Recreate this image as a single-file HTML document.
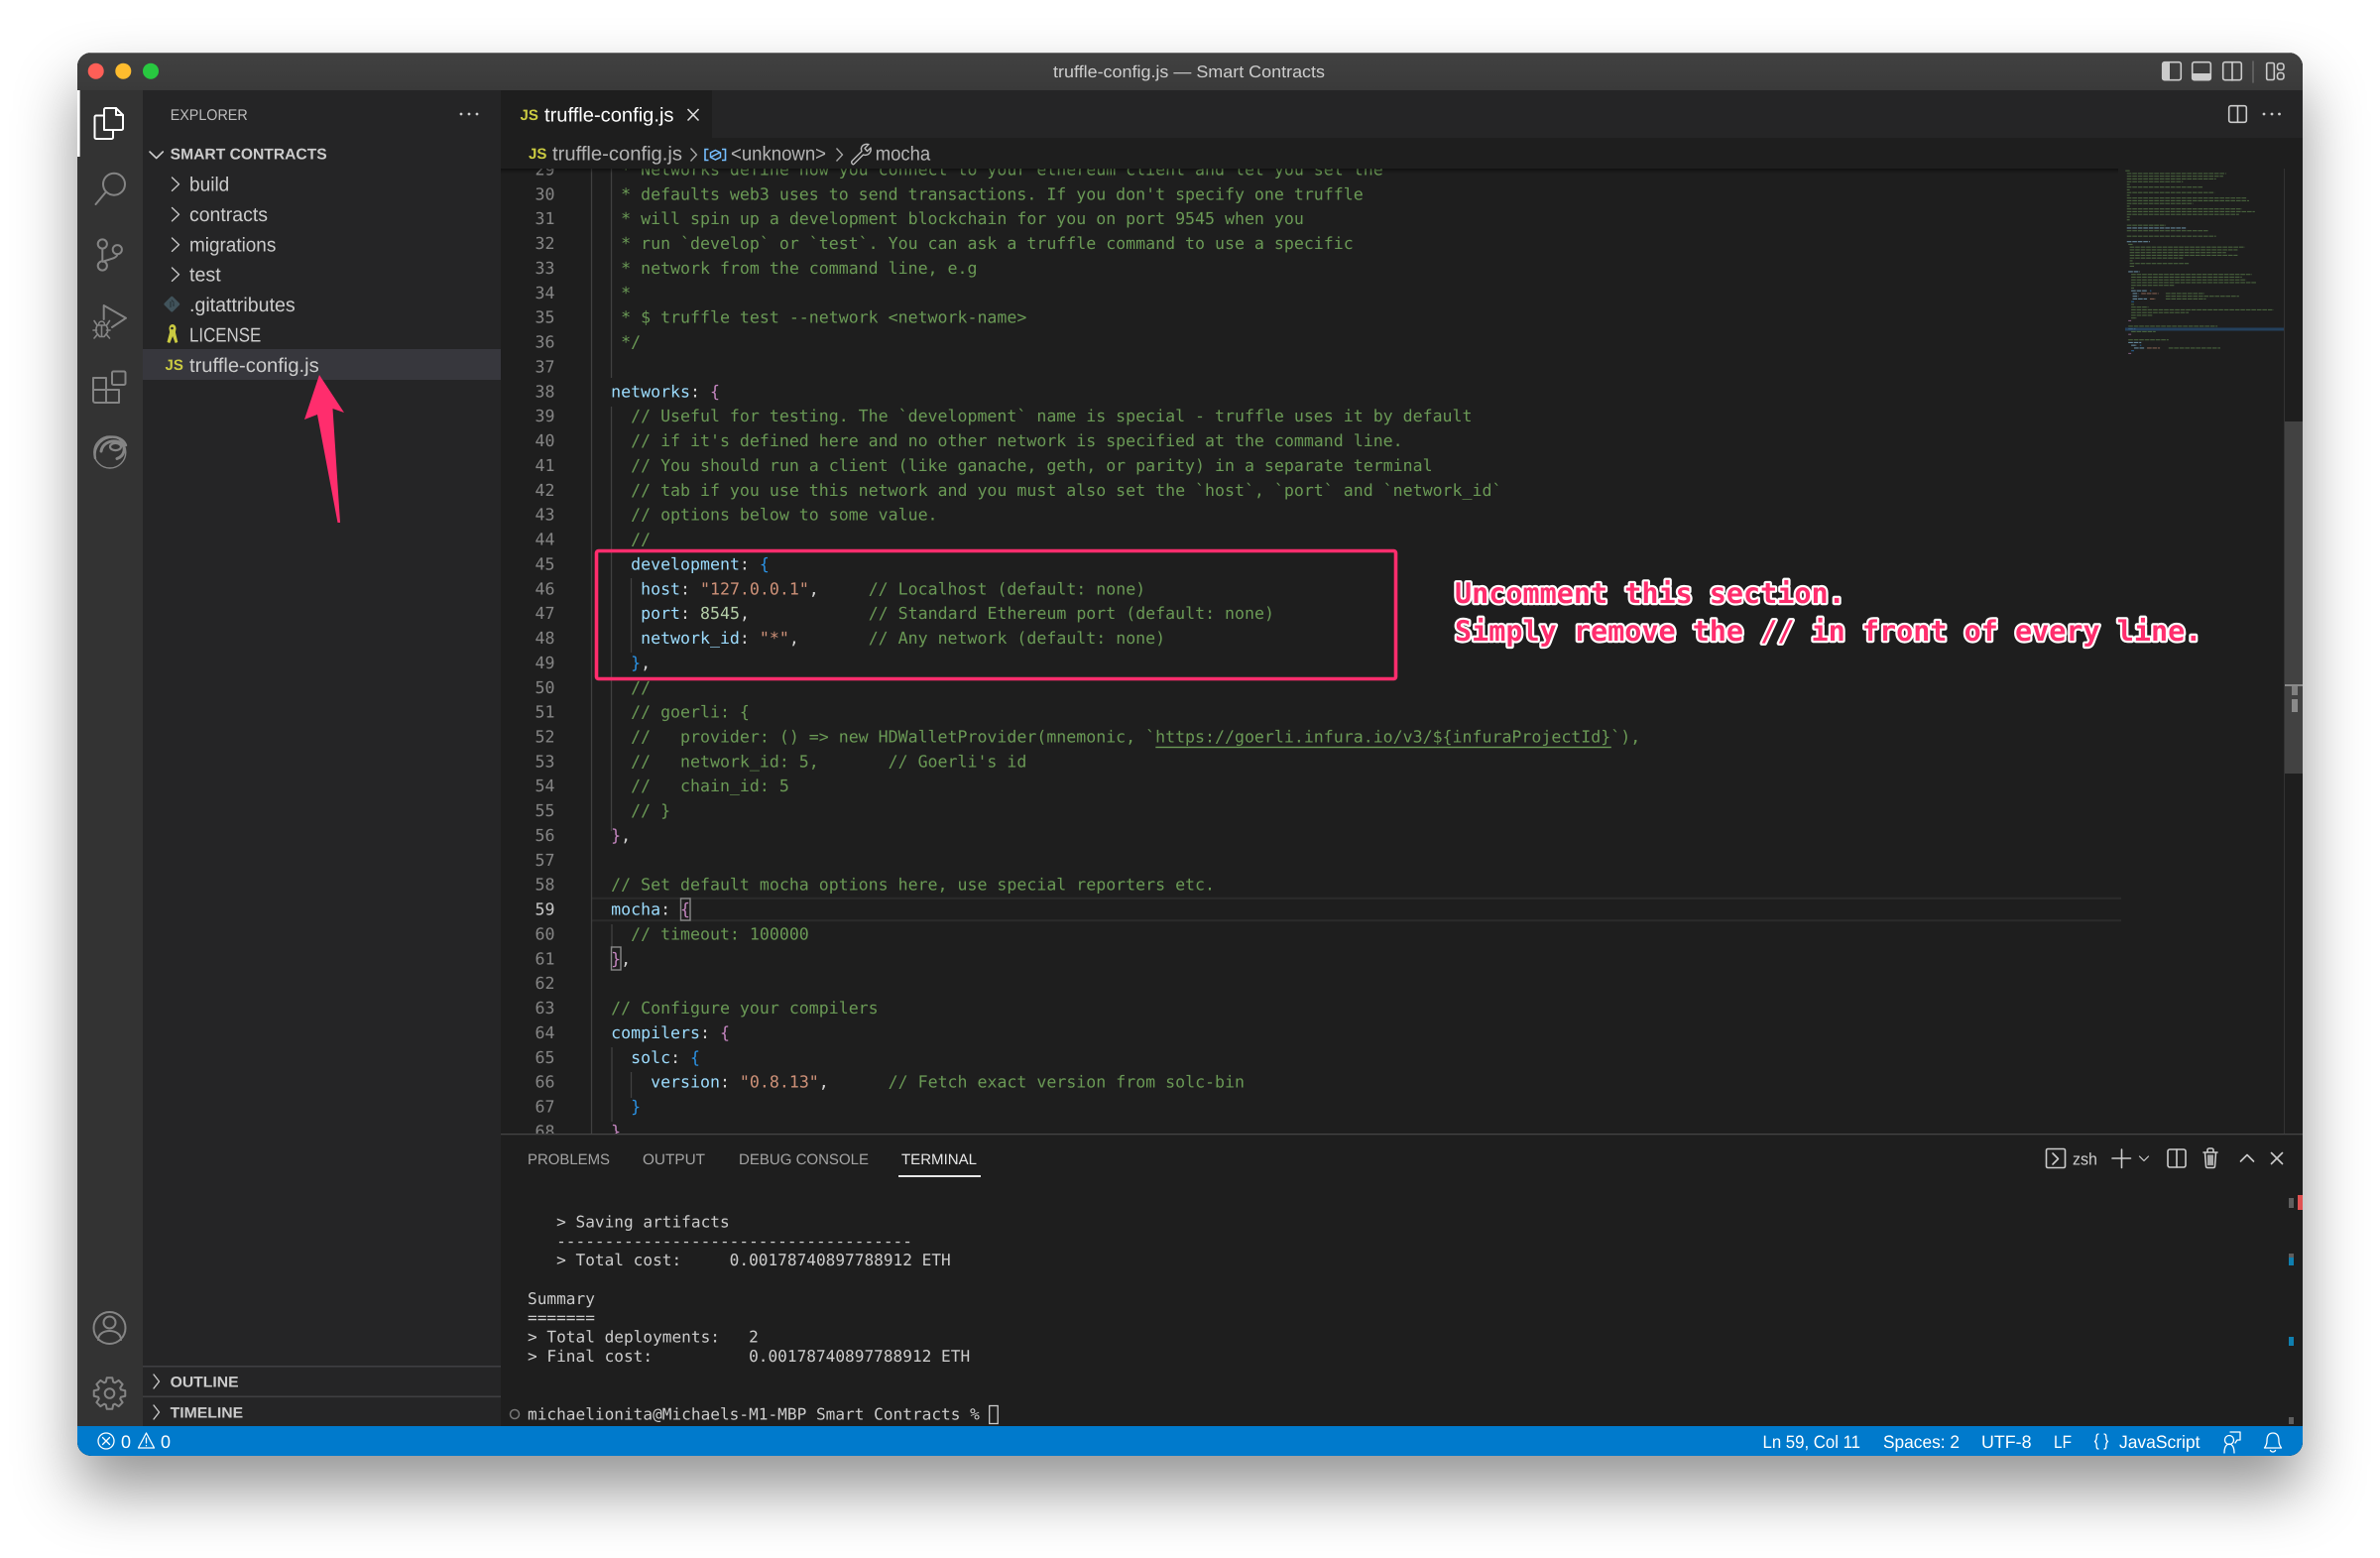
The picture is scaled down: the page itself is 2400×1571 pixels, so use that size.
<!DOCTYPE html>
<html><head><meta charset="utf-8"><title>truffle-config.js — Smart Contracts</title>
<style>
html,body{margin:0;padding:0;background:#fff;width:2400px;height:1571px;overflow:hidden}
#shadow{position:absolute;left:78px;top:53px;width:2244px;height:1415px;border-radius:14px;box-shadow:0 34px 62px 0 rgba(0,0,0,.42);background:#1e1e1e}
svg{position:absolute;left:0;top:0}
text{white-space:pre;text-rendering:geometricPrecision}
.u{font-family:"Liberation Sans",sans-serif;font-size:20px;fill:#ccc}
.m{font-family:"DejaVu Sans Mono",monospace;font-size:16.58px;fill:#D4D4D4;transform:translate(-.3px,-.7px)}
.t{font-family:"DejaVu Sans Mono",monospace;font-size:16.11px;fill:#ccc;transform:translateY(-.5px)}
.ln{font-family:"DejaVu Sans Mono",monospace;font-size:16.58px;fill:#858585;text-anchor:end;transform:translateY(-.7px)}
.c{fill:#6A9955}.k{fill:#9CDCFE}.p{fill:#C586C0}.b{fill:#2B92E4}.s{fill:#CE9178}.n{fill:#B5CEA8}
.st{font-size:18px;fill:#fff}
.ic{fill:none;stroke:#858585;stroke-width:2;stroke-linecap:round;stroke-linejoin:round}
.w{fill:none;stroke:#ccc;stroke-width:1.6;stroke-linecap:round;stroke-linejoin:round}
.js{font-family:"Liberation Sans",sans-serif;font-weight:bold;font-size:15px;fill:#cbcb41}
.ann{font-family:"DejaVu Sans Mono",monospace;font-weight:bold;font-size:28.45px;fill:#ff2d6d;stroke:#fff;stroke-width:4.4px;paint-order:stroke fill;stroke-linejoin:round}
</style></head>
<body>
<div id="shadow"></div>
<svg width="2400" height="1571" viewBox="0 0 2400 1571" xmlns="http://www.w3.org/2000/svg">
<defs>
<clipPath id="win"><rect x="78" y="53" width="2244" height="1415" rx="14"/></clipPath>
<clipPath id="ed"><rect x="505" y="170" width="1636" height="973"/></clipPath>
<linearGradient id="tb" x1="0" y1="0" x2="0" y2="1"><stop offset="0" stop-color="#414141"/><stop offset="1" stop-color="#3a3a3a"/></linearGradient>
<linearGradient id="sh" x1="0" y1="0" x2="0" y2="1"><stop offset="0" stop-color="#000" stop-opacity=".45"/><stop offset="1" stop-color="#000" stop-opacity="0"/></linearGradient>
</defs>
<g clip-path="url(#win)">
<rect x="78" y="53" width="2244" height="1415" fill="#1e1e1e"/>
<!-- title bar -->
<rect x="78" y="53" width="2244" height="38" fill="url(#tb)"/>
<rect x="78" y="53" width="2244" height="1" fill="#6e6e6e"/>
<circle cx="96.7" cy="71.7" r="8" fill="#ff5f57"/><circle cx="124.3" cy="71.7" r="8" fill="#febc2e"/><circle cx="152" cy="71.7" r="8" fill="#28c840"/>
<text class="u" x="1062" y="78" style="font-size:17px" textLength="274" lengthAdjust="spacingAndGlyphs">truffle-config.js — Smart Contracts</text>
<g class="w">
<rect x="2180.7" y="62.7" width="18.6" height="18" rx="2"/><rect x="2181" y="63" width="7" height="17.5" fill="#ccc" stroke="none"/>
<rect x="2210.7" y="62.7" width="18.6" height="18" rx="2"/><rect x="2211" y="74" width="18" height="6.5" fill="#ccc" stroke="none"/>
<rect x="2241.7" y="62.7" width="18.6" height="18" rx="2"/><path d="M2251 63v18"/>
<path d="M2272 62v21" stroke="#666"/>
<rect x="2285.7" y="63.5" width="7.6" height="17" rx="1.5"/><rect x="2296.5" y="64" width="6.5" height="6.5" rx="2.5"/><rect x="2296.5" y="73.5" width="6.5" height="6.5" rx="2.5"/>
</g>
<!-- activity bar -->
<rect x="78" y="91" width="66" height="1347" fill="#333"/>
<rect x="78" y="91" width="2.6" height="67" fill="#fff"/>
<g class="ic" style="stroke:#fff">
<path d="M105 118V110.5a1.5 1.5 0 0 1 1.5-1.5H117l7 7v13.5a1.5 1.5 0 0 1-1.5 1.5H114"/><path d="M117 109v7h7"/><path d="M105 116.5H97a1.5 1.5 0 0 0-1.5 1.5v20.5a1.5 1.5 0 0 0 1.5 1.5h15.500a1.5 1.5 0 0 0 1.5-1.5V131"/><path d="M105 116.5V131h9"/>
</g>
<g class="ic">
<circle cx="115" cy="185.7" r="11"/><path d="M106.5 194 96.5 206"/>
<circle cx="103.3" cy="246" r="4.6"/><circle cx="103.3" cy="268" r="4.6"/><circle cx="118.3" cy="251.7" r="4.6"/><path d="M103.3 250.7v12.6M118.3 256.3c0 4.5-9 5-14.5 7.5"/>
<path d="M104.7 322V308L127 320.700 113 330"/>
<g stroke-width="1.600"><path d="M98 328h9l1.500 3v4l-3.500 4.500h-4.500L97 335v-4zM99.500 327.500c0-4.500 6-4.500 6 0M102.500 329v10M95 323.500l3 4.500M110.500 323.500l-3 4.500M94 333h3.500M111 333h-3.500M95 341l3-3.500M110.500 341l-3-3.500"/></g>
<path d="M107 381v12h13v13H96a2 2 0 0 1-2-2v-23zM94 393h13v13"/><rect x="113" y="374.5" width="13.5" height="13.5" rx="1.5"/>
<circle cx="110.800" cy="456" r="16" stroke-width="1.400"/>
<path d="M96 462c-2-9 4-19 14-21 8-1.500 15 2 17 8" stroke-width="2.400"/>
<path d="M102 455c1-7 8-11 15-10 6 1 9 5 8 10-1 4-4 6.500-7 7.500" stroke-width="3"/>
<ellipse cx="116.500" cy="450.500" rx="5.500" ry="3.600" stroke-width="2.200"/>
<circle cx="110.5" cy="1339" r="16"/><circle cx="110.5" cy="1333.5" r="6"/><path d="M99 1351c0-12 23-12 23 0"/>
<g transform="translate(110.5,1405)"><path d="M15.76-2.78L15.76 2.78L11.41 3.71L10.69 5.45L13.11 9.18L9.18 13.11L5.45 10.69L3.71 11.41L2.78 15.76L-2.78 15.76L-3.71 11.41L-5.45 10.69L-9.18 13.11L-13.11 9.18L-10.69 5.45L-11.41 3.71L-15.76 2.78L-15.76-2.78L-11.41-3.71L-10.69-5.45L-13.11-9.18L-9.18-13.11L-5.45-10.69L-3.71-11.41L-2.78-15.76L2.78-15.76L3.71-11.41L5.45-10.69L9.18-13.11L13.11-9.18L10.69-5.45L11.41-3.71Z"/><circle r="4.8"/></g>
</g>
<!-- sidebar -->
<rect x="144" y="91" width="361" height="1347" fill="#252526"/>
<rect x="144" y="352" width="361" height="31" fill="#37373d"/>
<text class="u" x="171.7" y="121" style="font-size:15.5px;fill:#bbb" textLength="78" lengthAdjust="spacingAndGlyphs">EXPLORER</text>
<g fill="#ccc"><circle cx="465" cy="115" r="1.4"/><circle cx="473" cy="115" r="1.4"/><circle cx="481" cy="115" r="1.4"/></g>
<path class="w" d="M151 153l6.7 6.5L164.3 153"/>
<text class="u" x="171.7" y="160.7" style="font-size:15.5px;font-weight:bold" textLength="158" lengthAdjust="spacingAndGlyphs">SMART CONTRACTS</text>
<path class="w" style="stroke-width:1.3" d="M173.5 179l7 6.7-7 6.7M173.5 209.5l7 6.7-7 6.7M173.5 240l7 6.7-7 6.7M173.5 270l7 6.7-7 6.7"/>
<text class="u" x="191" y="192.5" textLength="40.3" lengthAdjust="spacingAndGlyphs">build</text>
<text class="u" x="191" y="222.9" textLength="79" lengthAdjust="spacingAndGlyphs">contracts</text>
<text class="u" x="191" y="253.3" textLength="87.3" lengthAdjust="spacingAndGlyphs">migrations</text>
<text class="u" x="191" y="283.7" textLength="31.7" lengthAdjust="spacingAndGlyphs">test</text>
<text class="u" x="191" y="314.1" textLength="106.7" lengthAdjust="spacingAndGlyphs">.gitattributes</text>
<text class="u" x="191" y="344.5" textLength="72.3" lengthAdjust="spacingAndGlyphs">LICENSE</text>
<text class="u" x="191" y="374.9" textLength="130.7" lengthAdjust="spacingAndGlyphs">truffle-config.js</text>
<rect x="167.3" y="300.7" width="12" height="12" rx="1.5" transform="rotate(45 173.3 306.7)" fill="#41535b"/>
<path d="M173 302.5l2.5 3M172 304v6M175 306v3" stroke="#2a363b" stroke-width="1.3" fill="none"/>
<path d="M173.5 327c2.8 0 4 2 4 4.5l-.6 3.5 2.4 10-2.6 1-2.6-7-2.8 7-2.8-1 2.6-10-.6-3.5c0-2.5 1.2-4.5 4-4.5z" fill="#cbcb41"/><circle cx="173.5" cy="331" r="1.3" fill="#252526"/>
<text class="js" x="166.5" y="373">JS</text>
<rect x="144" y="1377" width="361" height="1.6" fill="#3f3f41"/>
<rect x="144" y="1407.5" width="361" height="1.6" fill="#3f3f41"/>
<path class="w" style="stroke-width:1.3" d="M155 1386l5.5 7-5.5 7M155 1417l5.5 7-5.5 7"/>
<text class="u" x="171.6" y="1398.7" style="font-size:15px;font-weight:bold" textLength="69" lengthAdjust="spacingAndGlyphs">OUTLINE</text>
<text class="u" x="171.6" y="1429.3" style="font-size:15px;font-weight:bold" textLength="73.5" lengthAdjust="spacingAndGlyphs">TIMELINE</text>
<!-- tabs -->
<rect x="505" y="91" width="1817" height="48" fill="#252526"/>
<rect x="505" y="91" width="213" height="48" fill="#1e1e1e"/>
<text class="js" x="524.5" y="121">JS</text>
<text class="u" x="549" y="122.3" style="fill:#fff" textLength="130.5" lengthAdjust="spacingAndGlyphs">truffle-config.js</text>
<path d="M693.5 110l11 11.5M704.5 110l-11 11.5" stroke="#ddd" stroke-width="1.6" fill="none"/>
<rect x="2247.7" y="106.7" width="17.6" height="16.6" rx="2" class="w"/><path class="w" d="M2256.5 107v16"/>
<g fill="#ccc"><circle cx="2283" cy="115" r="1.4"/><circle cx="2291" cy="115" r="1.4"/><circle cx="2298.5" cy="115" r="1.4"/></g>
<!-- breadcrumb -->
<text class="js" x="533" y="160">JS</text>
<text class="u" x="557" y="161.7" style="fill:#b4b4b4" textLength="131" lengthAdjust="spacingAndGlyphs">truffle-config.js</text>
<path d="M696.5 149.5l6 6.5-6 6.5M843.5 149.5l6 6.5-6 6.5" stroke="#aaa" stroke-width="1.3" fill="none"/>
<path d="M714.5 150.5h-3.5v11h3.5M728 150.5h3.5v11H728" fill="none" stroke="#75beff" stroke-width="1.6"/>
<path d="M721.5 151.5l5 2.5v4.5l-5 2.5-5-2.5V154zM717.5 158l8-4" fill="none" stroke="#75beff" stroke-width="1.5"/>
<text class="u" x="737" y="161.7" style="fill:#b4b4b4" textLength="96" lengthAdjust="spacingAndGlyphs">&lt;unknown&gt;</text>
<path d="M859 162.5l10-10c-2-4.5 2-8 7-7l-4 4 2.5 3 3.5-3.5c1 5-3 8.5-7.5 7L861 165.5c-1 .8-3-1-2-3z" fill="none" stroke="#bbb" stroke-width="1.4" stroke-linejoin="round"/>
<text class="u" x="882.7" y="161.7" style="fill:#b4b4b4" textLength="55.5" lengthAdjust="spacingAndGlyphs">mocha</text>
<!-- editor -->
<g clip-path="url(#ed)">
<path d="M596 905.7H2139M596 928.3H2139" stroke="#2b2b2b" stroke-width="2" fill="none"/>
<g stroke="#404040" stroke-width="1.3" fill="none">
<path d="M596.5 170V1143M616.5 170V381M616.5 410V838M636.5 583V658M617 932V957M617 1056V1131M636.5 1081V1107"/>
</g>
<text class="ln" x="559.5" y="177.1">29</text><text class="ln" x="559.5" y="202">30</text><text class="ln" x="559.5" y="226.9">31</text><text class="ln" x="559.5" y="251.7">32</text><text class="ln" x="559.5" y="276.6">33</text><text class="ln" x="559.5" y="301.5">34</text><text class="ln" x="559.5" y="326.4">35</text><text class="ln" x="559.5" y="351.2">36</text><text class="ln" x="559.5" y="376.1">37</text><text class="ln" x="559.5" y="401">38</text><text class="ln" x="559.5" y="425.8">39</text><text class="ln" x="559.5" y="450.7">40</text><text class="ln" x="559.5" y="475.6">41</text><text class="ln" x="559.5" y="500.5">42</text><text class="ln" x="559.5" y="525.3">43</text><text class="ln" x="559.5" y="550.2">44</text><text class="ln" x="559.5" y="575.1">45</text><text class="ln" x="559.5" y="600">46</text><text class="ln" x="559.5" y="624.8">47</text><text class="ln" x="559.5" y="649.7">48</text><text class="ln" x="559.5" y="674.6">49</text><text class="ln" x="559.5" y="699.5">50</text><text class="ln" x="559.5" y="724.3">51</text><text class="ln" x="559.5" y="749.2">52</text><text class="ln" x="559.5" y="774.1">53</text><text class="ln" x="559.5" y="798.9">54</text><text class="ln" x="559.5" y="823.8">55</text><text class="ln" x="559.5" y="848.7">56</text><text class="ln" x="559.5" y="873.6">57</text><text class="ln" x="559.5" y="898.4">58</text><text class="ln" x="559.5" y="923.3" style="fill:#c6c6c6">59</text><text class="ln" x="559.5" y="948.2">60</text><text class="ln" x="559.5" y="973.1">61</text><text class="ln" x="559.5" y="997.9">62</text><text class="ln" x="559.5" y="1022.8">63</text><text class="ln" x="559.5" y="1047.7">64</text><text class="ln" x="559.5" y="1072.5">65</text><text class="ln" x="559.5" y="1097.4">66</text><text class="ln" x="559.5" y="1122.3">67</text><text class="ln" x="559.5" y="1147.2">68</text>
<text class="m c" x="596.5" y="177.1">   * Networks define how you connect to your ethereum client and let you set the</text>
<text class="m c" x="596.5" y="202">   * defaults web3 uses to send transactions. If you don't specify one truffle</text>
<text class="m c" x="596.5" y="226.9">   * will spin up a development blockchain for you on port 9545 when you</text>
<text class="m c" x="596.5" y="251.7">   * run `develop` or `test`. You can ask a truffle command to use a specific</text>
<text class="m c" x="596.5" y="276.6">   * network from the command line, e.g</text>
<text class="m c" x="596.5" y="301.5">   *</text>
<text class="m c" x="596.5" y="326.4">   * $ truffle test --network &lt;network-name&gt;</text>
<text class="m c" x="596.5" y="351.2">   */</text>
<text class="m" x="596.5" y="401">  <tspan class="k">networks</tspan>: <tspan class="p">{</tspan></text>
<text class="m c" x="596.5" y="425.8">    // Useful for testing. The `development` name is special - truffle uses it by default</text>
<text class="m c" x="596.5" y="450.7">    // if it's defined here and no other network is specified at the command line.</text>
<text class="m c" x="596.5" y="475.6">    // You should run a client (like ganache, geth, or parity) in a separate terminal</text>
<text class="m c" x="596.5" y="500.5">    // tab if you use this network and you must also set the `host`, `port` and `network_id`</text>
<text class="m c" x="596.5" y="525.3">    // options below to some value.</text>
<text class="m c" x="596.5" y="550.2">    //</text>
<text class="m" x="596.5" y="575.1">    <tspan class="k">development</tspan>: <tspan class="b">{</tspan></text>
<text class="m" x="596.5" y="600">     <tspan class="k">host</tspan>: <tspan class="s">"127.0.0.1"</tspan>,     <tspan class="c">// Localhost (default: none)</tspan></text>
<text class="m" x="596.5" y="624.8">     <tspan class="k">port</tspan>: <tspan class="n">8545</tspan>,            <tspan class="c">// Standard Ethereum port (default: none)</tspan></text>
<text class="m" x="596.5" y="649.7">     <tspan class="k">network_id</tspan>: <tspan class="s">"*"</tspan>,       <tspan class="c">// Any network (default: none)</tspan></text>
<text class="m" x="596.5" y="674.6">    <tspan class="b">}</tspan>,</text>
<text class="m c" x="596.5" y="699.5">    //</text>
<text class="m c" x="596.5" y="724.3">    // goerli: {</text>
<text class="m c" x="596.5" y="749.2">    //   provider: () =&gt; new HDWalletProvider(mnemonic, `https://goerli.infura.io/v3/${infuraProjectId}`),</text>
<rect x="1165.3" y="752.8" width="459.5" height="1.4" fill="#6A9955"/>
<text class="m c" x="596.5" y="774.1">    //   network_id: 5,       // Goerli's id</text>
<text class="m c" x="596.5" y="798.9">    //   chain_id: 5</text>
<text class="m c" x="596.5" y="823.8">    // }</text>
<text class="m" x="596.5" y="848.7">  <tspan class="p">}</tspan>,</text>
<text class="m c" x="596.5" y="898.4">  // Set default mocha options here, use special reporters etc.</text>
<rect x="686.5" y="906" width="9.5" height="22" fill="none" stroke="#888" stroke-width="1.4"/>
<rect x="616.5" y="955" width="9.5" height="23" fill="none" stroke="#888" stroke-width="1.4"/>
<text class="m" x="596.5" y="923.3">  <tspan class="k">mocha</tspan>: <tspan class="p">{</tspan></text>
<text class="m c" x="596.5" y="948.2">    // timeout: 100000</text>
<text class="m" x="596.5" y="973.1">  <tspan class="p">}</tspan>,</text>
<text class="m c" x="596.5" y="1022.8">  // Configure your compilers</text>
<text class="m" x="596.5" y="1047.7">  <tspan class="k">compilers</tspan>: <tspan class="p">{</tspan></text>
<text class="m" x="596.5" y="1072.5">    <tspan class="k">solc</tspan>: <tspan class="b">{</tspan></text>
<text class="m" x="596.5" y="1097.4">      <tspan class="k">version</tspan>: <tspan class="s">"0.8.13"</tspan>,      <tspan class="c">// Fetch exact version from solc-bin</tspan></text>
<text class="m" x="596.5" y="1122.3">    <tspan class="b">}</tspan></text>
<text class="m" x="596.5" y="1147.2">  <tspan class="p">}</tspan></text>
</g>
<rect x="505" y="170" width="1631" height="5" fill="url(#sh)"/>
<!-- minimap -->
<g transform="translate(2143.3,172.2) scale(1.45,2.75)" fill="none" stroke-width=".4" stroke-dasharray="3.2 .6" opacity=".55">
<path stroke="#6A9955" d="M0 0H3M1 1H70M1 2H68M1 3H63M1 4H40M1 5H3M1 6H54M1 7H3M1 8H62M1 9H3M1 10H84M1 11H86M1 12H47M1 13H3M1 14H81M1 15H90M1 16H79M1 17H3M1 18H3M1 20H28M1 22H58M1 24H63M2 27H5M3 28H83M3 29H78M3 30H70M3 31H78M3 32H40M3 33H5M3 34H44M3 35H6M4 38H88M4 39H81M4 40H84M4 41H91M4 42H34M4 43H6M28 45H55M28 46H79M28 47H56M4 49H6M4 50H16M4 51H103M4 52H44M4 53H19M4 54H8M2 57H64M4 59H21M2 62H30M30 65H66"/>
<path stroke="#9CDCFE" d="M1 21H42M1 26H17M2 37H10M4 44H15M5 45H9M5 46H9M5 47H15M2 58H7M2 63H11M4 64H8M6 65H13"/>
<path stroke="#CE9178" d="M11 45H23M17 47H21M15 65H24"/>
<path stroke="#C586C0" d="M2 55H4M2 60H4M2 67H4"/>
<path stroke="#2B92E4" d="M4 48H6M4 66H6M17 44H18M10 64H11"/>
</g>
<rect x="2143" y="330.5" width="160" height="3" fill="#264f78" opacity=".7"/>
<!-- scrollbar -->
<rect x="2303" y="170" width="1" height="973" fill="#333"/>
<rect x="2304" y="425" width="18" height="355" fill="#424242"/>
<rect x="2304" y="690" width="18" height="2" fill="#8a8a8a"/><rect x="2311" y="692" width="6" height="9" fill="#808080"/><rect x="2311" y="705" width="6" height="13" fill="#8a8a8a"/>
<!-- panel -->
<rect x="505" y="1143" width="1817" height="295" fill="#1e1e1e"/>
<rect x="505" y="1143" width="1817" height="1.3" fill="#444"/>
<text class="u" x="532" y="1174" style="font-size:15px;fill:#a3a3a3" textLength="83" lengthAdjust="spacingAndGlyphs">PROBLEMS</text>
<text class="u" x="648" y="1174" style="font-size:15px;fill:#a3a3a3" textLength="63" lengthAdjust="spacingAndGlyphs">OUTPUT</text>
<text class="u" x="745" y="1174" style="font-size:15px;fill:#a3a3a3" textLength="131" lengthAdjust="spacingAndGlyphs">DEBUG CONSOLE</text>
<text class="u" x="909" y="1174" style="font-size:15px;fill:#e7e7e7" textLength="76" lengthAdjust="spacingAndGlyphs">TERMINAL</text>
<rect x="906" y="1185" width="83" height="2" fill="#e7e7e7"/>
<g class="w">
<rect x="2063.5" y="1158.5" width="19" height="19" rx="1.5"/><path d="M2070 1163l5.5 5.5-5.5 5.5"/>
<path d="M2139.5 1159v18.5M2130 1168h18.5"/><path d="M2157.5 1166l4.5 4.5 4.5-4.5" stroke-width="1.2"/>
<rect x="2186" y="1159" width="18" height="18" rx="2"/><path d="M2195 1159v18"/>
<path d="M2222 1162h14M2226 1162v-2.5c0-1 1-1.5 2-1.500h2c1 0 2 .5 2 1.500v2.500M2223.500 1162l1 14c0 .8.7 1.500 1.500 1.500h6c.8 0 1.500-.7 1.500-1.500l1-14M2227 1165v9.500M2229 1165v9.500M2231 1165v9.500"/>
<path d="M2259.500 1171l6.500-6.500 6.500 6.500M2290.500 1162.500l11 11M2301.500 1162.500l-11 11"/>
</g>
<text class="u" x="2090" y="1174.3" style="font-size:17px" textLength="25" lengthAdjust="spacingAndGlyphs">zsh</text>
<text class="t" x="532" y="1238">   &gt; Saving artifacts</text>
<text class="t" x="532" y="1257.3">   -------------------------------------</text>
<text class="t" x="532" y="1276.7">   &gt; Total cost:     0.00178740897788912 ETH</text>
<text class="t" x="532" y="1315.3">Summary</text>
<text class="t" x="532" y="1334.6">=======</text>
<text class="t" x="532" y="1354">&gt; Total deployments:   2</text>
<text class="t" x="532" y="1373.3">&gt; Final cost:          0.00178740897788912 ETH</text>
<circle cx="519" cy="1426" r="4.5" fill="none" stroke="#777" stroke-width="1.5"/>
<text class="t" x="532" y="1432">michaelionita@Michaels-M1-MBP Smart Contracts % </text>
<rect x="997.7" y="1417.5" width="8.5" height="18" fill="none" stroke="#ccc" stroke-width="1.3"/>
<rect x="2308" y="1208" width="5" height="10" fill="#5e5e5e"/><rect x="2317" y="1205" width="5" height="15" fill="#e05252"/>
<rect x="2308" y="1264" width="5" height="4" fill="#5e5e5e"/><rect x="2308" y="1268" width="5" height="8" fill="#0f7fb0"/>
<rect x="2308" y="1348" width="5" height="9" fill="#0f7fb0"/><rect x="2308" y="1429" width="5" height="7" fill="#5e5e5e"/>
<!-- status bar -->
<rect x="78" y="1438" width="2244" height="30" fill="#007acc"/>
<g fill="none" stroke="#fff" stroke-width="1.3" stroke-linecap="round" stroke-linejoin="round">
<circle cx="107" cy="1453" r="8"/><path d="M103.5 1449.5l7 7M110.5 1449.5l-7 7"/>
<path d="M147.500 1445l8 15h-16zM147.500 1450v5M147.500 1457.500v.3"/>
<path d="M2116 1446c-2.500 0-1.500 3-2 5s-1.500 2.500-1.500 2.500 1 .5 1.500 2.500-.5 5 2 5M2122 1446c2.500 0 1.500 3 2 5s1.500 2.500 1.500 2.500-1 .5-1.500 2.500.5 5-2 5"/>
<circle cx="2248" cy="1452" r="4.500"/><path d="M2243 1465c0-7 3-9 5-9s5 2 5 9M2249 1444h10v8h-3l-2 3"/>
<path d="M2292 1445c-5 0-6 4-6 8 0 3-1 5-2.500 7h17c-1.500-2-2.500-4-2.500-7 0-4-1-8-6-8zM2289.500 1462.500c1 2 4 2 5 0"/>
</g>
<text class="u st" x="122" y="1460" textLength="10" lengthAdjust="spacingAndGlyphs">0</text>
<text class="u st" x="162" y="1460" textLength="10" lengthAdjust="spacingAndGlyphs">0</text>
<text class="u st" x="1777.5" y="1460" textLength="98.5" lengthAdjust="spacingAndGlyphs">Ln 59, Col 11</text>
<text class="u st" x="1899" y="1460" textLength="77" lengthAdjust="spacingAndGlyphs">Spaces: 2</text>
<text class="u st" x="1998" y="1460" textLength="50.5" lengthAdjust="spacingAndGlyphs">UTF-8</text>
<text class="u st" x="2071" y="1460" textLength="18" lengthAdjust="spacingAndGlyphs">LF</text>
<text class="u st" x="2137" y="1460" textLength="81.5" lengthAdjust="spacingAndGlyphs">JavaScript</text>
</g>
<!-- annotations -->
<rect x="601.5" y="555.5" width="806" height="129" rx="2" fill="none" stroke="#ff2d6d" stroke-width="3.6"/>
<polygon points="322,378 347,416 335.5,412 343,527 340.5,527 320,418 307,423" fill="#ff2d6d"/>
<text class="ann" x="1467" y="608">Uncomment this section.</text>
<text class="ann" x="1467" y="646">Simply remove the // in front of every line.</text>
</svg>
</body></html>
